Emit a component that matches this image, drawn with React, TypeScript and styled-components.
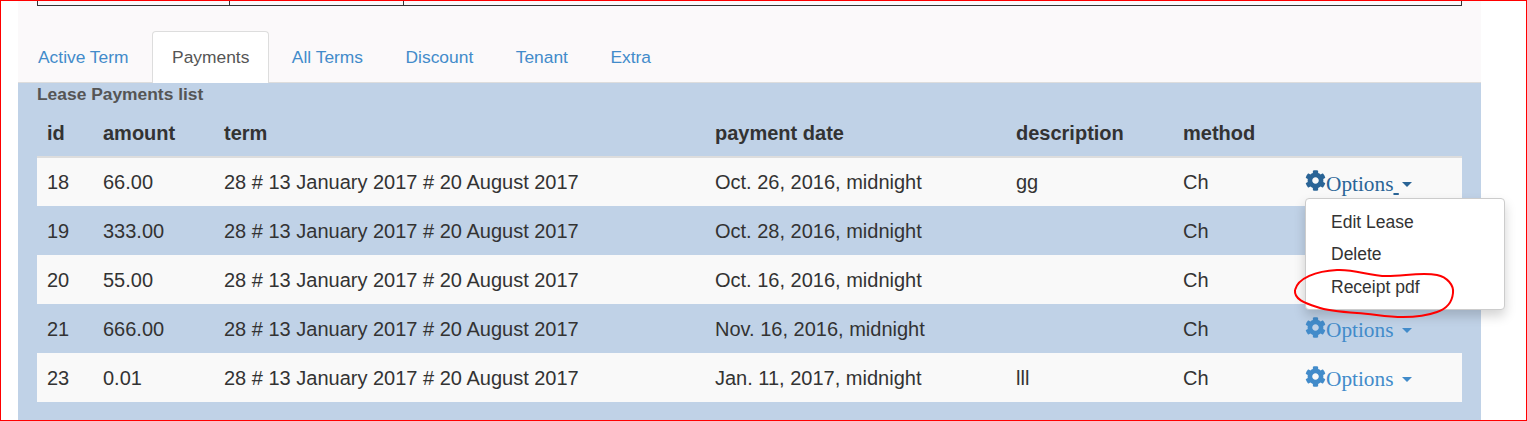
import { createGlobalStyle } from "styled-components"
import styled from "styled-components"
import { FaCog } from "react-icons/fa"

const GlobalStyle = createGlobalStyle`
  html, body { margin: 0; padding: 0; background: #fff; }
  body { font-family: "Liberation Sans", Arial, sans-serif; color: #333; }
`

const Frame = styled.div`
  position: relative;
  box-sizing: border-box;
  width: 1527px;
  height: 421px;
  border: 1px solid #f00;
  padding-left: 17px;
  overflow: hidden;
`

const Panel = styled.div`
  width: 1463px;
  height: 420px;
  background: #fbf9fa;
`

const TopTableEdge = styled.div`
  display: grid;
  grid-template-columns: 191px 174px 1fr;
  box-sizing: border-box;
  width: 1425px;
  height: 5px;
  margin-left: 19px;
  border: 1px solid #333;
  border-top: 0;
  div + div { border-left: 1px solid #333; }
`

const Tabs = styled.ul`
  display: flex;
  gap: 2.5px;
  box-sizing: border-box;
  height: 77px;
  margin: 0;
  padding: 25px 0 0 0;
  list-style: none;
  border-bottom: 1px solid #ddd;
`

const Tab = styled.li<{ $active?: boolean }>`
  box-sizing: border-box;
  height: 52px;
  padding: 0 19px;
  font-size: 17.4px;
  line-height: 50px;
  border: 1px solid ${p => (p.$active ? "#ddd" : "transparent")};
  border-bottom: 0;
  border-radius: 4px 4px 0 0;
  background: ${p => (p.$active ? "#fff" : "transparent")};
  color: ${p => (p.$active ? "#555" : "#428bca")};
  &:first-child { margin-right: 1px; }
`

const Content = styled.div`
  height: 338px;
  padding: 0 19px;
  background: #c0d2e7;
`

const Caption = styled.div`
  padding-top: 1px;
  height: 21px;
  font-size: 17.4px;
  font-weight: 700;
  line-height: 20px;
  color: #555;
`

const Table = styled.table`
  width: 1425px;
  border-collapse: collapse;
  table-layout: fixed;
  font-size: 20px;
  color: #333;
`

const HeadCell = styled.th`
  height: 45px;
  padding: 6px 0 0 10px;
  text-align: left;
  font-size: 20px;
  font-weight: 700;
  border-bottom: 2px solid #ddd;
`

const Row = styled.tr`
  height: 49px;
  background: #f9f9f9;
  &:nth-child(even) { background: transparent; }
`

const Cell = styled.td`
  padding: 1px 0 0 10px;
  border-top: 0;
`

const OptionsCell = styled(Cell)`
  padding: 4px 0 0 20px;
`

const OptionsToggle = styled.span<{ $hover?: boolean }>`
  display: inline-flex;
  align-items: center;
  font-family: "Liberation Serif", "Times New Roman", serif;
  font-size: 21.3px;
  color: ${p => (p.$hover ? "#2a6496" : "#428bca")};
  svg { width: 21px; height: 21px; margin-top: -7px; }
`

const OptionsSpace = styled.span<{ $hover?: boolean }>`
  white-space: pre;
  text-decoration: ${p => (p.$hover ? "underline" : "none")};
`

const Caret = styled.i`
  display: inline-block;
  width: 0;
  height: 0;
  margin-left: 3px;
  border-top: 5px solid currentColor;
  border-left: 5px solid transparent;
  border-right: 5px solid transparent;
`

const Menu = styled.ul`
  position: absolute;
  left: 1304px;
  top: 197px;
  box-sizing: border-box;
  width: 200px;
  height: 112px;
  margin: 0;
  padding: 7px 0 0;
  list-style: none;
  background: #fff;
  border: 1px solid #ccc;
  border-radius: 4px;
  box-shadow: 0 6px 12px rgba(0, 0, 0, 0.175);
`

const MenuItem = styled.li`
  height: 32.4px;
  padding-left: 25px;
  font-size: 17.5px;
  line-height: 32px;
  color: #333;
`

const Scribble = styled.svg`
  position: absolute;
  left: 1285px;
  top: 262px;
  overflow: visible;
`

const columns = [
  { label: "id", width: 56 },
  { label: "amount", width: 121 },
  { label: "term", width: 491 },
  { label: "payment date", width: 301 },
  { label: "description", width: 167 },
  { label: "method", width: 112 },
  { label: "", width: 177 },
]

const term = "28 # 13 January 2017 # 20 August 2017"

const payments = [
  { id: 18, amount: "66.00", date: "Oct. 26, 2016, midnight", description: "gg", hover: true },
  { id: 19, amount: "333.00", date: "Oct. 28, 2016, midnight", description: "" },
  { id: 20, amount: "55.00", date: "Oct. 16, 2016, midnight", description: "" },
  { id: 21, amount: "666.00", date: "Nov. 16, 2016, midnight", description: "" },
  { id: 23, amount: "0.01", date: "Jan. 11, 2017, midnight", description: "lll" },
]

export default function App() {
  return (
    <>
      <GlobalStyle />
      <Frame>
        <Panel>
          <TopTableEdge>
            <div />
            <div />
            <div />
          </TopTableEdge>
          <Tabs>
            <Tab>Active Term</Tab>
            <Tab $active>Payments</Tab>
            <Tab>All Terms</Tab>
            <Tab>Discount</Tab>
            <Tab>Tenant</Tab>
            <Tab>Extra</Tab>
          </Tabs>
          <Content>
            <Caption>Lease Payments list</Caption>
            <Table>
              <colgroup>
                {columns.map(c => (
                  <col key={c.label} width={c.width} />
                ))}
              </colgroup>
              <thead>
                <tr>
                  {columns.map(c => (
                    <HeadCell key={c.label}>{c.label}</HeadCell>
                  ))}
                </tr>
              </thead>
              <tbody>
                {payments.map(p => (
                  <Row key={p.id}>
                    <Cell>{p.id}</Cell>
                    <Cell>{p.amount}</Cell>
                    <Cell>{term}</Cell>
                    <Cell>{p.date}</Cell>
                    <Cell>{p.description}</Cell>
                    <Cell>Ch</Cell>
                    <OptionsCell>
                      <OptionsToggle $hover={p.hover}>
                        <FaCog />
                        Options
                        <OptionsSpace $hover={p.hover}> </OptionsSpace>
                        <Caret />
                      </OptionsToggle>
                    </OptionsCell>
                  </Row>
                ))}
              </tbody>
            </Table>
          </Content>
        </Panel>
        <Menu>
          <MenuItem>Edit Lease</MenuItem>
          <MenuItem>Delete</MenuItem>
          <MenuItem>Receipt pdf</MenuItem>
        </Menu>
        <Scribble width="160" height="60" viewBox="0 0 160 60" fill="none">
          <path
            d="M9 27 C12 15 30 8 51 7 C70 6 82 13 101 13 C118 13 136 9 151 12 C161 14 168 22 167 30 C166 40 160 46 151 49 C140 53 128 54 117 54 C100 54 88 51 71 50 C56 49 42 48 31 44 C18 40 8 36 9 27"
            stroke="#f00"
            strokeWidth="2"
          />
        </Scribble>
      </Frame>
    </>
  )
}
